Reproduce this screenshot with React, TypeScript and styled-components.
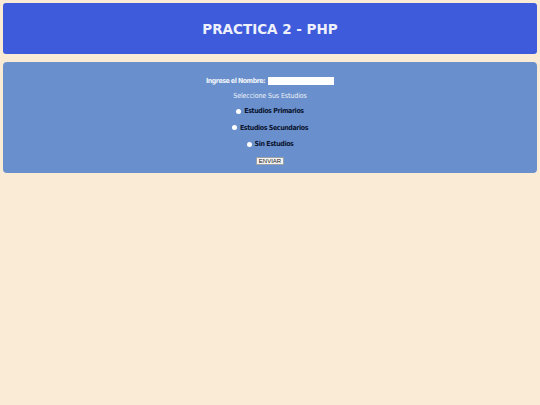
import React from 'react';
import styled, { createGlobalStyle } from 'styled-components';

const GlobalStyle = createGlobalStyle`
    html, body {
        margin: 0;
        padding: 0;
        background-color: #faebd7;
    }
    body {
        font-family: "DejaVu Sans Condensed", "DejaVu Sans", sans-serif;
    }
`;

const Page = styled.div`
    display: flex;
    flex-direction: column;
    gap: 8px;
    padding: 3px;
    min-height: 399px;
`;

const Header = styled.header`
    height: 51px;
    display: flex;
    align-items: center;
    justify-content: center;
    background-color: #3d5bdb;
    border-radius: 3px;
    h1 {
        margin: 0;
        font-family: "DejaVu Sans", sans-serif;
        font-size: 13.5px;
        font-weight: bold;
        color: #eef0fb;
    }
`;

const Panel = styled.form`
    height: 111px;
    box-sizing: border-box;
    padding-top: 15px;
    display: flex;
    flex-direction: column;
    align-items: center;
    background-color: #6990cc;
    border-radius: 4px;
    font-size: 7px;
`;

const Row = styled.div<{ $h: number; $top?: number }>`
    height: ${(p) => p.$h}px;
    margin-top: ${(p) => p.$top ?? 0}px;
    display: flex;
    align-items: center;
    justify-content: center;
    gap: 3px;
`;

const Label = styled.label`
    font-weight: bold;
    letter-spacing: -0.5px;
    color: #f0f3fa;
`;

const Caption = styled.span`
    letter-spacing: -0.1px;
    color: #eef2fa;
`;

const TextInput = styled.input`
    width: 66px;
    height: 8px;
    box-sizing: border-box;
    padding: 0;
    border: none;
    background: #ffffff;
`;

const Radio = styled.span`
    width: 5px;
    height: 5px;
    border-radius: 50%;
    background: #ffffff;
`;

const Option = styled.label`
    display: flex;
    align-items: center;
    gap: 3px;
    font-weight: bold;
    letter-spacing: -0.4px;
    color: #0c1430;
`;

const Submit = styled.button`
    height: 8px;
    padding: 0 2px;
    border: 1px solid #9aa0a8;
    background: #f2f2f2;
    font-family: "Liberation Sans", Arial, sans-serif;
    font-size: 6px;
    line-height: 6px;
    color: #222;
`;

const estudios = ['Estudios Primarios', 'Estudios Secundarios', 'Sin Estudios'];

export default function App() {
    return (
        <>
            <GlobalStyle />
            <Page>
                <Header>
                    <h1>PRACTICA 2 - PHP</h1>
                </Header>
                <Panel onSubmit={(e) => e.preventDefault()}>
                    <Row $h={8}>
                        <Label>Ingrese el Nombre:</Label>
                        <TextInput type="text" />
                    </Row>
                    <Row $h={10} $top={6}>
                        <Caption>Seleccione Sus Estudios</Caption>
                    </Row>
                    {estudios.map((e, i) => (
                        <Row key={e} $h={i === 1 ? 17 : 16} $top={i === 0 ? 2 : 0}>
                            <Option>
                                <Radio />
                                {e}
                            </Option>
                        </Row>
                    ))}
                    <Row $h={17}>
                        <Submit type="submit">ENVIAR</Submit>
                    </Row>
                </Panel>
            </Page>
        </>
    );
}
